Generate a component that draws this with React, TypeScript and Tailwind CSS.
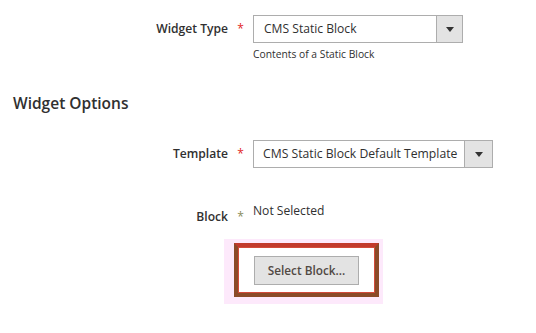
export default function App() {
  const font = { fontFamily: '"Open Sans", "Liberation Sans", sans-serif' };
  const Caret = () => (
    <svg width="8" height="5" viewBox="0 0 8 5"><path d="M0 0h8L4 5z" fill="#333" /></svg>
  );
  return (
    <div className="w-[536px] h-[333px] bg-white text-[#303030] relative overflow-hidden" style={font}>
      <div className="pt-[15px]">
        <div className="flex items-start">
          <div className="w-[228px] text-right text-[12.1px] font-semibold leading-[28px]">Widget Type</div>
          <div className="w-[25px] text-center text-[#e22626] text-[12px] leading-[28px]">*</div>
          <div className="flex flex-col">
            <div className="flex w-[210px] h-[28px] border border-[#adadad] bg-white">
              <div className="flex-1 pl-[10px] text-[12.1px] leading-[26px]">CMS Static Block</div>
              <div className="w-[26px] bg-[#e3e3e3] border-l border-[#adadad] flex items-center justify-center"><Caret /></div>
            </div>
            <div className="text-[10.3px] leading-[20px] mt-[1px]">Contents of a Static Block</div>
          </div>
        </div>
        <div className="ml-[13px] mt-[27px] text-[15.5px] font-semibold leading-[24px]">Widget Options</div>
        <div className="flex items-start mt-[25px]">
          <div className="w-[228px] text-right text-[12.1px] font-semibold leading-[28px]">Template</div>
          <div className="w-[25px] text-center text-[#e22626] text-[12px] leading-[28px]">*</div>
          <div className="flex w-[240px] h-[28px] border border-[#adadad] bg-white">
            <div className="flex-1 pl-[9px] text-[12.2px] leading-[26px] whitespace-nowrap">CMS Static Block Default Template</div>
            <div className="w-[28px] bg-[#e3e3e3] border-l border-[#adadad] flex items-center justify-center"><Caret /></div>
          </div>
        </div>
        <div className="flex items-start mt-[33px]">
          <div className="w-[228px] text-right text-[12.1px] font-semibold leading-[20px] pt-[6px]">Block</div>
          <div className="w-[25px] text-center text-[#8a8a5a] text-[12px] leading-[20px] pt-[6px]">*</div>
          <div className="text-[12.1px] leading-[20px]">Not Selected</div>
        </div>
        <div className="ml-[224px] mt-[12px] w-[159px] h-[65px] bg-[#fde9fb] pt-[4px] pl-[10px]">
          <div className="w-[145px] h-[54px] bg-white border-[4px] border-[#8b4a28] border-t-[#c23a2c] shadow-[inset_0_0_0_1px_#d24a3a] flex items-center justify-center">
            <div className="w-[105px] h-[29px] bg-[#e3e3e3] border border-[#adadad] text-[11.8px] leading-[27px] text-center font-semibold text-[#514943]">Select Block...</div>
          </div>
        </div>
      </div>
    </div>
  );
}
